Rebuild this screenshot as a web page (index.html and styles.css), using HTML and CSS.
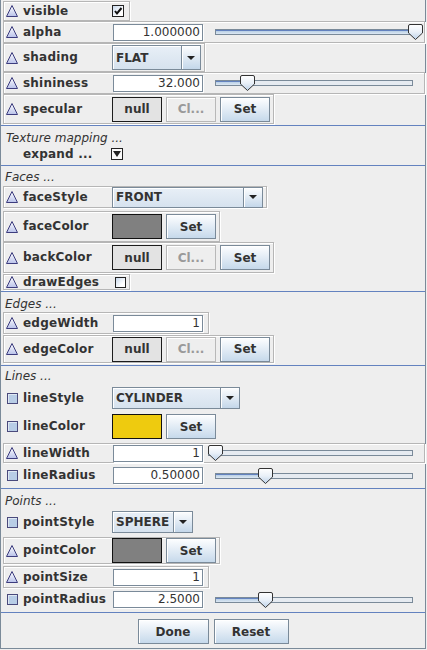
FILE: index.html
```html
<!DOCTYPE html>
<html>
<head>
<meta charset="utf-8">
<title>Appearance</title>
<link rel="stylesheet" href="styles.css">
</head>
<body>
<div class="win">
  <svg class="defs" width="0" height="0" aria-hidden="true">
    <defs>
      <linearGradient id="trig" x1="0" y1="0" x2="0" y2="1">
        <stop offset="0" stop-color="#ffffff"/>
        <stop offset="1" stop-color="#b9c2ea"/>
      </linearGradient>
      <linearGradient id="thg" x1="0" y1="0" x2="0" y2="1">
        <stop offset="0" stop-color="#ffffff"/>
        <stop offset="0.5" stop-color="#e9f0f8"/>
        <stop offset="1" stop-color="#bcd1e8"/>
      </linearGradient>
    </defs>
  </svg>

  <!-- section 1 -->
  <div class="row b fit h20 mt1 pr5">
    <svg class="tri" width="12" height="12" viewBox="0 0 12 12"><path d="M6 0.5 L11.5 11.5 H0.5 Z" fill="url(#trig)" stroke="#3c3c7e"/></svg>
    <span class="lbl">visible</span>
    <span class="cb"><svg width="10" height="10" viewBox="0 0 10 10"><path d="M2 5 L4 7.5 L8.5 2" fill="none" stroke="#111" stroke-width="2"/></svg></span>
  </div>
  <div class="row b full h22">
    <svg class="tri" width="12" height="12" viewBox="0 0 12 12"><path d="M6 0.5 L11.5 11.5 H0.5 Z" fill="url(#trig)" stroke="#3c3c7e"/></svg>
    <span class="lbl">alpha</span>
    <span class="tf">1.000000</span>
    <div class="slider">
      <div class="track"><div class="fill" style="width:100%"></div></div>
      <svg class="thumb" style="left:193px" width="15" height="16" viewBox="0 0 15 16"><path d="M2 0.5 H13 Q14.5 0.5 14.5 2 V9 L7.5 15.5 L0.5 9 V2 Q0.5 0.5 2 0.5 Z" fill="url(#thg)" stroke="#333"/></svg>
    </div>
  </div>
  <div class="row b fit h29">
    <svg class="tri" width="12" height="12" viewBox="0 0 12 12"><path d="M6 0.5 L11.5 11.5 H0.5 Z" fill="url(#trig)" stroke="#3c3c7e"/></svg>
    <span class="lbl">shading</span>
    <div class="combo c-shading"><span class="val">FLAT</span><span class="arr"></span></div>
  </div>
  <div class="row b full h22">
    <svg class="tri" width="12" height="12" viewBox="0 0 12 12"><path d="M6 0.5 L11.5 11.5 H0.5 Z" fill="url(#trig)" stroke="#3c3c7e"/></svg>
    <span class="lbl">shininess</span>
    <span class="tf">32.000</span>
    <div class="slider">
      <div class="track"><div class="fill" style="width:32px"></div></div>
      <svg class="thumb" style="left:25px" width="15" height="16" viewBox="0 0 15 16"><path d="M2 0.5 H13 Q14.5 0.5 14.5 2 V9 L7.5 15.5 L0.5 9 V2 Q0.5 0.5 2 0.5 Z" fill="url(#thg)" stroke="#333"/></svg>
    </div>
  </div>
  <div class="row b fit h30">
    <svg class="tri" width="12" height="12" viewBox="0 0 12 12"><path d="M6 0.5 L11.5 11.5 H0.5 Z" fill="url(#trig)" stroke="#3c3c7e"/></svg>
    <span class="lbl">specular</span>
    <span class="btn null">null</span>
    <span class="btn dis gap">Cl...</span>
    <span class="btn gap">Set</span>
  </div>
  <div class="sep mt1"></div>

  <!-- section 2 -->
  <div class="title mt5 tx">Texture mapping ...</div>
  <div class="row h16">
    <span class="lbl exl">expand ...</span>
    <span class="exp"></span>
  </div>
  <div class="sep mt3"></div>

  <!-- section 3 -->
  <div class="title mt4">Faces ...</div>
  <div class="row b fit h22 mt1">
    <svg class="tri" width="12" height="12" viewBox="0 0 12 12"><path d="M6 0.5 L11.5 11.5 H0.5 Z" fill="url(#trig)" stroke="#3c3c7e"/></svg>
    <span class="lbl">faceStyle</span>
    <div class="combo c-face"><span class="val">FRONT</span><span class="arr"></span></div>
  </div>
  <div class="row b fit h31 mt3">
    <svg class="tri" width="12" height="12" viewBox="0 0 12 12"><path d="M6 0.5 L11.5 11.5 H0.5 Z" fill="url(#trig)" stroke="#3c3c7e"/></svg>
    <span class="lbl">faceColor</span>
    <span class="sw"></span>
    <span class="btn gap">Set</span>
  </div>
  <div class="row b fit h31">
    <svg class="tri" width="12" height="12" viewBox="0 0 12 12"><path d="M6 0.5 L11.5 11.5 H0.5 Z" fill="url(#trig)" stroke="#3c3c7e"/></svg>
    <span class="lbl">backColor</span>
    <span class="btn null">null</span>
    <span class="btn dis gap">Cl...</span>
    <span class="btn gap">Set</span>
  </div>
  <div class="row b fit h16 mt1 pr3">
    <svg class="tri" width="12" height="12" viewBox="0 0 12 12"><path d="M6 0.5 L11.5 11.5 H0.5 Z" fill="url(#trig)" stroke="#3c3c7e"/></svg>
    <span class="lbl">drawEdges</span>
    <span class="cb cb-off"></span>
  </div>
  <div class="sep mt1"></div>

  <!-- section 4 -->
  <div class="title mt5">Edges ...</div>
  <div class="row b fit h22 pr5">
    <svg class="tri" width="12" height="12" viewBox="0 0 12 12"><path d="M6 0.5 L11.5 11.5 H0.5 Z" fill="url(#trig)" stroke="#3c3c7e"/></svg>
    <span class="lbl">edgeWidth</span>
    <span class="tf">1</span>
  </div>
  <div class="row b fit h28 mt1">
    <svg class="tri" width="12" height="12" viewBox="0 0 12 12"><path d="M6 0.5 L11.5 11.5 H0.5 Z" fill="url(#trig)" stroke="#3c3c7e"/></svg>
    <span class="lbl">edgeColor</span>
    <span class="btn null">null</span>
    <span class="btn dis gap">Cl...</span>
    <span class="btn gap">Set</span>
  </div>
  <div class="sep mt2"></div>

  <!-- section 5 -->
  <div class="title mt3">Lines ...</div>
  <div class="row h24 mt2">
    <span class="sq"></span>
    <span class="lbl">lineStyle</span>
    <div class="combo c-line"><span class="val">CYLINDER</span><span class="arr"></span></div>
  </div>
  <div class="row h29 mt2">
    <span class="sq"></span>
    <span class="lbl">lineColor</span>
    <span class="sw yellow"></span>
    <span class="btn gap">Set</span>
  </div>
  <div class="row b full h20 mt2">
    <svg class="tri" width="12" height="12" viewBox="0 0 12 12"><path d="M6 0.5 L11.5 11.5 H0.5 Z" fill="url(#trig)" stroke="#3c3c7e"/></svg>
    <span class="lbl">lineWidth</span>
    <span class="tf">1</span>
    <div class="slider wide">
      <div class="track"><div class="fill" style="width:0"></div></div>
      <svg class="thumb" style="left:0" width="15" height="16" viewBox="0 0 15 16"><path d="M2 0.5 H13 Q14.5 0.5 14.5 2 V9 L7.5 15.5 L0.5 9 V2 Q0.5 0.5 2 0.5 Z" fill="url(#thg)" stroke="#333"/></svg>
    </div>
  </div>
  <div class="row h21 mt2">
    <span class="sq"></span>
    <span class="lbl">lineRadius</span>
    <span class="tf">0.50000</span>
    <div class="slider">
      <div class="track"><div class="fill" style="width:50px"></div></div>
      <svg class="thumb" style="left:43px" width="15" height="16" viewBox="0 0 15 16"><path d="M2 0.5 H13 Q14.5 0.5 14.5 2 V9 L7.5 15.5 L0.5 9 V2 Q0.5 0.5 2 0.5 Z" fill="url(#thg)" stroke="#333"/></svg>
    </div>
  </div>
  <div class="sep mt2"></div>

  <!-- section 6 -->
  <div class="title mt5">Points ...</div>
  <div class="row h24 mt1">
    <span class="sq"></span>
    <span class="lbl">pointStyle</span>
    <div class="combo c-point"><span class="val">SPHERE</span><span class="arr"></span></div>
  </div>
  <div class="row b fit h27 mt3">
    <svg class="tri" width="12" height="12" viewBox="0 0 12 12"><path d="M6 0.5 L11.5 11.5 H0.5 Z" fill="url(#trig)" stroke="#3c3c7e"/></svg>
    <span class="lbl">pointColor</span>
    <span class="sw"></span>
    <span class="btn gap">Set</span>
  </div>
  <div class="row b fit h22 mt2 pr5">
    <svg class="tri" width="12" height="12" viewBox="0 0 12 12"><path d="M6 0.5 L11.5 11.5 H0.5 Z" fill="url(#trig)" stroke="#3c3c7e"/></svg>
    <span class="lbl">pointSize</span>
    <span class="tf">1</span>
  </div>
  <div class="row h21 mt1">
    <span class="sq"></span>
    <span class="lbl">pointRadius</span>
    <span class="tf">2.5000</span>
    <div class="slider">
      <div class="track"><div class="fill" style="width:50px"></div></div>
      <svg class="thumb" style="left:43px" width="15" height="16" viewBox="0 0 15 16"><path d="M2 0.5 H13 Q14.5 0.5 14.5 2 V9 L7.5 15.5 L0.5 9 V2 Q0.5 0.5 2 0.5 Z" fill="url(#thg)" stroke="#333"/></svg>
    </div>
  </div>
  <div class="sep mt2"></div>

  <div class="btns">
    <span class="btn done">Done</span>
    <span class="btn reset">Reset</span>
  </div>
</div>
</body>
</html>
```

FILE: styles.css
```css
* { box-sizing: border-box; }
html, body { margin: 0; padding: 0; background: #eeeeee; }
body {
  font-family: "DejaVu Sans", "Liberation Sans", sans-serif;
  font-size: 12px;
  color: #333333;
}
.defs { position: absolute; width: 0; height: 0; overflow: hidden; }

.win {
  width: 426px;
  height: 649px;
  border-left: 1px solid #7a8a99;
  border-right: 1px solid #7a8a99;
  border-bottom: 1px solid #7a8a99;
  display: flex;
  flex-direction: column;
}

.row {
  display: flex;
  align-items: center;
  flex: none;
  margin-left: 2px;
  padding-left: 1px;
  border: 1px solid transparent;
}
.b {
  border-color: #b6b6b6;
  box-shadow: 1px 1px 0 #ffffff, inset 1px 1px 0 #ffffff;
}
.fit { align-self: flex-start; padding-right: 3px; }
.full { margin-right: 0; }
.pr3 { padding-right: 3px; }
.pr5 { padding-right: 5px; }

.mt1 { margin-top: 1px; }
.mt2 { margin-top: 2px; }
.mt3 { margin-top: 3px; }
.mt4 { margin-top: 4px; }
.mt5 { margin-top: 5px; }
.h16 { height: 16px; }
.h20 { height: 20px; }
.h21 { height: 21px; }
.h22 { height: 22px; }
.h24 { height: 24px; }
.h27 { height: 27px; }
.h28 { height: 28px; }
.h29 { height: 29px; }
.h30 { height: 30px; }
.h31 { height: 31px; }

.sep { height: 1px; background: #6382bf; flex: none; }

.title {
  font-style: italic;
  line-height: 15px;
  margin-left: 4px;
  flex: none;
}
.title.tx { margin-left: 5px; }

.tri { display: block; flex: none; margin-left: 1px; }
.sq {
  flex: none;
  width: 11px;
  height: 11px;
  margin-left: 2px;
  border: 1px solid #4a4a7c;
  background: #b8cde6;
  box-shadow: inset 1px 1px 0 #dfe8f3;
}

.lbl {
  flex: none;
  width: 89px;
  margin-left: 5px;
  font-weight: bold;
  line-height: 15px;
  letter-spacing: 0.2px;
  white-space: nowrap;
}
.exl { margin-left: 18px; width: 88px; }

.cb {
  flex: none;
  width: 12px;
  height: 12px;
  border: 1px solid #222;
  background: linear-gradient(135deg, #c9d9ec, #ffffff 70%);
  display: block;
}
.cb svg { display: block; }
.cb-off { margin-left: 3px; width: 11px; height: 11px; }

.exp {
  flex: none;
  width: 12px;
  height: 12px;
  border: 1px solid #222;
  background: #fafafa;
  display: flex;
  align-items: center;
  justify-content: center;
}
.exp::before {
  content: "";
  border-left: 4px solid transparent;
  border-right: 4px solid transparent;
  border-top: 6px solid #222;
}

.tf {
  flex: none;
  width: 90px;
  height: 17px;
  margin-left: 1px;
  border: 1px solid #7a8a99;
  box-shadow: 1px 1px 0 #ffffff;
  background: #ffffff;
  text-align: right;
  padding-right: 2px;
  line-height: 15px;
  color: #333;
}

.slider {
  position: relative;
  flex: none;
  width: 198px;
  height: 16px;
  margin-left: 12px;
}
.slider.wide { width: 205px; margin-left: 5px; }
.track {
  margin-top: 5px;
  height: 6px;
  border: 1px solid #7a8a99;
  background: #e6ebf1;
}
.fill {
  height: 100%;
  background: linear-gradient(#6382bf 0, #6382bf 1px, #b8cfe5 1px, #dde8f3 100%);
}
.thumb { position: absolute; top: 0; display: block; }

.combo {
  flex: none;
  display: flex;
  border: 1px solid #7a8a99;
  font-weight: bold;
}
.combo .val {
  flex: 1;
  display: flex;
  align-items: center;
  padding-left: 3px;
  background: linear-gradient(#e8eff7, #d6e2ee);
  box-shadow: inset 1px 1px 0 #ffffff;
  white-space: nowrap;
}
.combo .arr {
  flex: none;
  width: 19px;
  border-left: 1px solid #7a8a99;
  background: linear-gradient(#fcfdfe, #e3ecf5 45%, #c4d7ea);
  box-shadow: inset 1px 1px 0 #ffffff;
  display: flex;
  align-items: center;
  justify-content: center;
}
.combo .arr::before {
  content: "";
  border-left: 4px solid transparent;
  border-right: 4px solid transparent;
  border-top: 4px solid #222;
}
.c-shading { width: 89px; height: 25px; }
.c-face { width: 151px; height: 21px; }
.c-line { width: 128px; height: 22px; }
.c-point { width: 81px; height: 22px; }

.btn {
  flex: none;
  width: 50px;
  height: 25px;
  border: 1px solid #7a8a99;
  background: linear-gradient(#fdfeff 0%, #eaf1f8 35%, #c6d9eb 100%);
  box-shadow: inset 1px 1px 0 #ffffff;
  font-weight: bold;
  display: flex;
  align-items: center;
  justify-content: center;
  color: #333;
}
.btn.gap { margin-left: 4px; }
.btn.null { background: #e3e3e3; border-color: #1c1c1c; box-shadow: none; }
.btn.dis { background: #eeeeee; border-color: #b8b8b8; color: #9a9a9a; }

.sw {
  flex: none;
  width: 50px;
  height: 25px;
  border: 1px solid #111;
  background: #808080;
}
.sw.yellow { background: #eecb0f; }

.btns {
  flex: none;
  display: flex;
  justify-content: center;
  gap: 5px;
  margin-top: 6px;
}
.btn.done { width: 71px; }
.btn.reset { width: 75px; }
```
